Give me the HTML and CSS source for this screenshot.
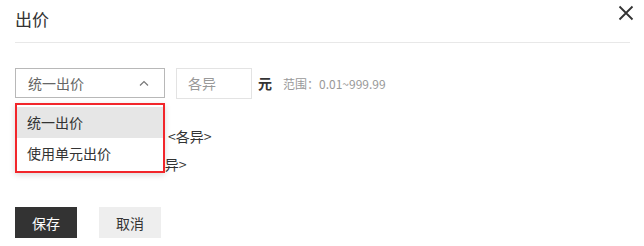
FILE: index.html
```html
<!DOCTYPE html>
<html lang="zh-CN">
<head>
    <meta charset="UTF-8">
    <title>出价</title>
    <link rel="stylesheet" href="styles.css">
</head>
<body>
    <div class="dialog">
        <div class="dialog-header">
            <h2 class="dialog-title">出价</h2>
            <button class="close-button" aria-label="关闭">
                <svg width="16" height="16" viewBox="0 0 16 16">
                    <path d="M1.5 1.5 L14.5 14.5 M14.5 1.5 L1.5 14.5" stroke="#333" stroke-width="1.8" fill="none"/>
                </svg>
            </button>
        </div>

        <div class="dialog-body">
            <div class="price-row">
                <div class="select-wrap">
                    <div class="select-box">
                        <span>统一出价</span>
                        <svg class="caret" width="10" height="6" viewBox="0 0 10 6">
                            <path d="M1 5.5 L5 1.5 L9 5.5" stroke="#777" stroke-width="1.2" fill="none"/>
                        </svg>
                    </div>
                    <ul class="dropdown">
                        <li class="dropdown-item active">统一出价</li>
                        <li class="dropdown-item">使用单元出价</li>
                    </ul>
                </div>
                <input type="text" class="price-input" placeholder="各异">
                <span class="unit">元</span>
                <span class="range">范围：0.01~999.99</span>
            </div>

            <div class="unit-list">
                <div class="unit-row first">&lt;各异&gt;</div>
                <div class="unit-row second">&lt;各异&gt;</div>
            </div>

            <div class="actions">
                <button class="btn btn-primary">保存</button>
                <button class="btn btn-default">取消</button>
            </div>
        </div>
    </div>
</body>
</html>
```

FILE: styles.css
```css
* {
    box-sizing: border-box;
}

body {
    margin: 0;
    background: #fff;
    color: #333;
    font-family: "Noto Sans CJK SC", "Noto Sans", "Liberation Sans", sans-serif;
}

.dialog {
    width: 644px;
    padding: 0 14px 0 15px;
}

.dialog-header {
    display: flex;
    justify-content: space-between;
    align-items: flex-start;
    height: 43px;
    border-bottom: 1px solid #e8e8e8;
}

.dialog-title {
    margin: 0;
    padding-top: 7px;
    font-size: 17px;
    line-height: 24px;
    font-weight: normal;
    color: #333;
}

.close-button {
    background: none;
    border: none;
    padding: 0;
    margin: 5px -4px 0 0;
    width: 16px;
    height: 16px;
    cursor: pointer;
}

.close-button svg {
    display: block;
}

.price-row {
    display: flex;
    align-items: center;
    margin-top: 25px;
    height: 30px;
}

.select-wrap {
    position: relative;
}

.select-box {
    display: flex;
    justify-content: space-between;
    align-items: center;
    width: 150px;
    height: 30px;
    padding: 0 15px 0 12px;
    border: 1px solid #b8b8b8;
    font-size: 14px;
    color: #666;
}

.caret {
    margin-top: -1px;
}

.dropdown {
    position: absolute;
    top: 35px;
    left: 0;
    width: 150px;
    height: 70px;
    margin: 0;
    padding: 2px 0;
    list-style: none;
    background: #fff;
    border: 2px solid #f2262b;
    box-shadow: 0 2px 6px rgba(0, 0, 0, 0.15);
    z-index: 10;
}

.dropdown-item {
    height: 31px;
    line-height: 31px;
    padding-left: 10px;
    font-size: 14px;
    color: #333;
}

.dropdown-item + .dropdown-item {
    height: 30px;
    line-height: 30px;
}

.dropdown-item.active {
    background: #e6e6e6;
}

.price-input {
    width: 76px;
    height: 31px;
    margin-left: 11px;
    padding: 0 11px;
    border: 1px solid #e3e3e3;
    font-family: inherit;
    font-size: 14px;
    color: #333;
    outline: none;
}

.price-input::placeholder {
    color: #999;
}

.unit {
    margin-left: 6px;
    font-size: 14px;
    font-weight: bold;
    color: #333;
}

.range {
    margin-left: 11px;
    font-size: 12px;
    color: #999;
}

.unit-list {
    margin-top: 23px;
}

.unit-row {
    font-size: 14px;
    color: #333;
}

.unit-row.first {
    height: 30px;
    line-height: 30px;
    padding-left: 153px;
}

.unit-row.second {
    height: 26px;
    line-height: 26px;
    padding-left: 128px;
}

.actions {
    display: flex;
    gap: 22px;
    margin-top: 30px;
}

.btn {
    width: 62px;
    height: 31px;
    border: none;
    font-family: inherit;
    font-size: 14px;
    cursor: pointer;
}

.btn-primary {
    background: #333;
    color: #fff;
}

.btn-default {
    background: #eee;
    color: #333;
}
```
